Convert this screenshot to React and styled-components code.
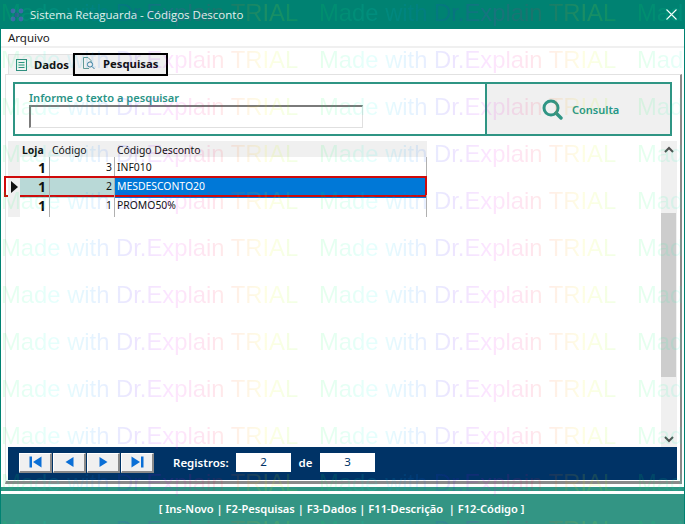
import React from "react";
import styled, { createGlobalStyle } from "styled-components";

const Global = createGlobalStyle`
  html, body { margin: 0; padding: 0; background: #fff; }
  * { box-sizing: border-box; }
`;

const Windowed = styled.div`
  position: relative;
  width: 685px;
  height: 524px;
  overflow: hidden;
  display: flex;
  flex-direction: column;
  background: #fff;
  border-left: 1px solid #008272;
  border-right: 1px solid #008272;
  font-family: "Noto Sans", sans-serif;
  color: #111;
`;

const TitleBar = styled.div`
  height: 29px;
  margin: 0 -1px;
  flex: none;
  background: #008272;
  display: flex;
  align-items: center;
  padding: 0 8px 0 9px;
  color: #e4f2ef;
`;
const TitleText = styled.span`
  margin-left: 5px;
  flex: 1;
  font-family: "Open Sans", sans-serif;
  font-size: 11.5px;
`;

const MenuBar = styled.div`
  height: 19px;
  flex: none;
  display: flex;
  align-items: center;
  padding-left: 7px;
  font-size: 11.5px;
  border-bottom: 2px solid #f0f0f0;
  color: #1a1a1a;
`;

const TabStrip = styled.div`
  height: 26px;
  flex: none;
  display: flex;
  align-items: flex-end;
  padding-left: 7px;
  position: relative;
  z-index: 1;
`;
const DataTab = styled.div`
  width: 65px;
  height: 20px;
  display: flex;
  align-items: center;
  gap: 7px;
  padding-left: 7px;
  background: #f3f3f3;
  border: 1px solid #e2e2e2;
  border-bottom: none;
  font-size: 11.3px;
  font-weight: 700;
`;
const SearchTab = styled.div`
  width: 95px;
  height: 23px;
  margin-bottom: -2px;
  display: flex;
  align-items: center;
  gap: 7px;
  padding: 0 0 3px 7px;
  background: #f0f0f0;
  border: 2px solid #000;
  font-size: 11.3px;
  font-weight: 700;
`;

const Page = styled.div`
  flex: none;
  height: 410px;
  margin-left: 4px;
  margin-right: 2px;
  border-top: 1px solid #e2e2e2;
  border-left: 1px solid #e2e2e2;
  border-right: 2px solid #8a8a8a;
  border-bottom: 3px solid #8a8a8a;
  display: flex;
  flex-direction: column;
  padding: 7px 2px 1px 2px;
`;

const SearchPanel = styled.div`
  height: 54px;
  flex: none;
  margin: 0 6px 0 5px;
  border: 2px solid #2f9584;
  display: flex;
`;
const SearchField = styled.div`
  width: 470px;
  padding: 7px 0 0 14px;
  display: flex;
  flex-direction: column;
`;
const FieldLabel = styled.label`
  font-size: 11.1px;
  font-weight: 600;
  line-height: 14px;
  color: #2a9486;
`;
const TextBox = styled.div`
  width: 334px;
  height: 23px;
  border: 1px solid #e0e0e0;
  border-top: 2px solid #7a7a7a;
  border-left: 2px solid #7a7a7a;
`;
const ConsultButton = styled.div`
  flex: 1;
  background: #f0f0f0;
  border-left: 2px solid #2f9584;
  display: flex;
  align-items: center;
  padding-left: 55px;
  gap: 9px;
  font-size: 11px;
  font-weight: 600;
  color: #23958a;
`;

const Results = styled.div`
  flex: 1;
  margin-top: 5px;
  display: flex;
  justify-content: space-between;
  align-items: stretch;
  padding-right: 1px;
`;
const Grid = styled.div`
  width: 419px;
  align-self: flex-start;
  font-size: 10.4px;
`;
const Columns = "12px 30px 65px 1fr";
const HeaderRow = styled.div`
  display: grid;
  grid-template-columns: ${Columns};
  height: 16px;
  background: #f0f0f0;
  align-items: center;
  padding-top: 2px;
`;
const HeadCell = styled.div`
  padding-left: 2px;
  font-weight: ${(p) => (p.$bold ? 700 : 400)};
  line-height: 14px;
`;
const DataRow = styled.div`
  display: grid;
  grid-template-columns: ${Columns};
  height: 19px;
  position: relative;
  ${(p) =>
    p.$selected &&
    `
    &::after {
      content: "";
      position: absolute;
      left: -4px;
      right: 0;
      top: 0;
      bottom: -2px;
      border: 2px solid #cf0a0a;
      pointer-events: none;
    }
  `}
`;
const Indicator = styled.div`
  background: #f0f0f0;
  display: flex;
  align-items: center;
  padding-left: 3px;
`;
const LojaCell = styled.div`
  font-size: 14px;
  font-weight: 700;
  text-align: right;
  padding-right: 3px;
  line-height: 22px;
  border-right: 1px solid #b0b0b0;
  background: ${(p) => (p.$selected ? "#b9d9d7" : "transparent")};
`;
const CodeCell = styled.div`
  text-align: right;
  padding-right: 2px;
  line-height: 21px;
  border-right: 1px solid #b0b0b0;
  background: ${(p) => (p.$selected ? "#b9d9d7" : "transparent")};
`;
const NameCell = styled.div`
  padding-left: 2px;
  line-height: 21px;
  border-right: 1px solid #b0b0b0;
  background: ${(p) => (p.$selected ? "#0078d7" : "transparent")};
  color: ${(p) => (p.$selected ? "#fff" : "#111")};
`;

const ScrollBar = styled.div`
  width: 16px;
  background: #f0f0f0;
  display: flex;
  flex-direction: column;
  align-items: center;
`;
const ScrollArrow = styled.div`
  height: 16px;
  display: flex;
  align-items: center;
  justify-content: center;
  flex: none;
`;
const ScrollThumb = styled.div`
  width: 15px;
  height: 164px;
  margin-top: 56px;
  background: #cdcdcd;
  align-self: flex-start;
`;
const ScrollGap = styled.div`
  flex: 1;
`;

const NavBar = styled.div`
  height: 33px;
  flex: none;
  background: #003366;
  margin-right: 1px;
  display: flex;
  align-items: center;
  padding: 0 0 2px 11px;
  color: #fff;
  font-size: 11.5px;
  font-weight: 600;
`;
const NavButtons = styled.div`
  display: flex;
  gap: 1px;
`;
const NavButton = styled.div`
  width: 33px;
  height: 20px;
  background: #f0f0f0;
  border-right: 2px solid #8a8a8a;
  border-bottom: 2px solid #8a8a8a;
  border-top: 1px solid #fff;
  border-left: 1px solid #fff;
  display: flex;
  align-items: center;
  justify-content: center;
`;
const RegLabel = styled.span`
  margin-left: 19px;
  width: 63px;
`;
const NumBox = styled.div`
  width: 55px;
  height: 19px;
  background: #fff;
  color: #003366;
  font-weight: 400;
  font-size: 11.5px;
  text-align: center;
  line-height: 17px;
`;
const DeLabel = styled.span`
  width: 29px;
  text-align: center;
`;

const BottomStripe = styled.div`
  height: 4px;
  flex: none;
  margin: 3px -1px 3px;
  background: #2f9584;
`;
const Footer = styled.div`
  flex: 1;
  margin: 0 -1px;
  background: #339584;
  color: #fff;
  font-size: 11.1px;
  font-weight: 600;
  display: flex;
  align-items: center;
  justify-content: center;
  white-space: pre;
  padding: 0 2px 2px 0;
`;

const Watermark = styled.div`
  position: absolute;
  left: 0;
  top: -1px;
  width: 685px;
  pointer-events: none;
  z-index: 5;
  display: flex;
  flex-direction: column;
`;
const WatermarkRow = styled.div`
  height: 47px;
  display: flex;
  flex: none;
`;
const WatermarkText = styled.span`
  flex: none;
  width: 297px;
  margin-right: 21px;
  font-family: "Liberation Sans", sans-serif;
  font-size: 23.8px;
  line-height: 28px;
  white-space: nowrap;
  color: transparent;
  background: linear-gradient(
    90deg,
    rgba(0, 255, 70, 0.1) 0%,
    rgba(0, 255, 230, 0.1) 18%,
    rgba(0, 130, 255, 0.1) 32%,
    rgba(70, 0, 255, 0.1) 45%,
    rgba(230, 0, 255, 0.1) 57%,
    rgba(255, 0, 70, 0.1) 72%,
    rgba(255, 130, 0, 0.1) 81%,
    rgba(240, 255, 0, 0.11) 90%,
    rgba(120, 255, 0, 0.1) 100%
  );
  -webkit-background-clip: text;
  background-clip: text;
`;

const First = () => (
  <svg width="13" height="12" viewBox="0 0 13 12">
    <rect x="0.5" y="0.5" width="2.5" height="11" fill="#0a6fd6" />
    <path d="M12.5 0.5 L4 6 L12.5 11.5 Z" fill="#0a6fd6" />
  </svg>
);
const Prev = () => (
  <svg width="9" height="12" viewBox="0 0 9 12">
    <path d="M8.5 1 L0.5 6 L8.5 11 Z" fill="#0a6fd6" />
  </svg>
);
const Next = () => (
  <svg width="9" height="12" viewBox="0 0 9 12">
    <path d="M0.5 1 L8.5 6 L0.5 11 Z" fill="#0a6fd6" />
  </svg>
);
const Last = () => (
  <svg width="13" height="12" viewBox="0 0 13 12">
    <path d="M0.5 0.5 L9 6 L0.5 11.5 Z" fill="#0a6fd6" />
    <rect x="10" y="0.5" width="2.5" height="11" fill="#0a6fd6" />
  </svg>
);
const ListIcon = () => (
  <svg width="11" height="12" viewBox="0 0 11 12" fill="none" stroke="#2f8f7f">
    <rect x="0.5" y="0.5" width="10" height="11" />
    <path d="M2.5 3.5 H8.5 M2.5 6 H8.5 M2.5 8.5 H8.5" />
  </svg>
);
const DocSearchIcon = () => (
  <svg width="14" height="14" viewBox="0 0 14 14" fill="none" stroke="#5f9a95">
    <path d="M7 12.5 H1.5 V1.5 H6 L9 4.5 V6" />
    <circle cx="8" cy="8.5" r="2.6" stroke="#3f7f9a" />
    <path d="M10 10.5 L12.5 13" stroke="#3f7f9a" />
  </svg>
);
const SearchIcon = () => (
  <svg width="21" height="21" viewBox="0 0 21 21" fill="none" stroke="#2f9584">
    <circle cx="9" cy="9" r="7" strokeWidth="3" />
    <path d="M14 14 L19 19" strokeWidth="3.4" strokeLinecap="round" />
  </svg>
);
const Close = () => (
  <svg width="11" height="11" viewBox="0 0 11 11" stroke="#fff" strokeWidth="1.1">
    <path d="M0.5 0.5 L10.5 10.5 M10.5 0.5 L0.5 10.5" />
  </svg>
);
const AppLogo = () => (
  <svg width="16" height="16" viewBox="0 0 16 16">
    <circle cx="8" cy="8" r="2.4" fill="#2d5f8f" />
    <circle cx="4" cy="4" r="2.4" fill="#3d6aa8" />
    <circle cx="12" cy="4" r="2.4" fill="#3d6aa8" />
    <circle cx="4" cy="12" r="2.4" fill="#3d6aa8" />
    <circle cx="12" cy="12" r="2.4" fill="#3d6aa8" />
  </svg>
);
const Chevron = ({ up }) => (
  <svg width="10" height="7" viewBox="0 0 10 7" fill="none" stroke="#505050" strokeWidth="2">
    <path d={up ? "M1 6 L5 2 L9 6" : "M1 1 L5 5 L9 1"} />
  </svg>
);
const RowMarker = () => (
  <svg width="7" height="12" viewBox="0 0 7 12">
    <path d="M0 0 L7 6 L0 12 Z" fill="#111" />
  </svg>
);

const rows = [
  { code: 3, name: "INF010" },
  { code: 2, name: "MESDESCONTO20", selected: true },
  { code: 1, name: "PROMO50%" },
];

export default function App() {
  return (
    <Windowed>
      <Global />
      <TitleBar>
        <AppLogo />
        <TitleText>Sistema Retaguarda - Códigos Desconto</TitleText>
        <Close />
      </TitleBar>
      <MenuBar>Arquivo</MenuBar>
      <TabStrip>
        <DataTab>
          <ListIcon />
          Dados
        </DataTab>
        <SearchTab>
          <DocSearchIcon />
          Pesquisas
        </SearchTab>
      </TabStrip>
      <Page>
        <SearchPanel>
          <SearchField>
            <FieldLabel>Informe o texto a pesquisar</FieldLabel>
            <TextBox />
          </SearchField>
          <ConsultButton>
            <SearchIcon />
            Consulta
          </ConsultButton>
        </SearchPanel>
        <Results>
          <Grid>
            <HeaderRow>
              <span />
              <HeadCell $bold>Loja</HeadCell>
              <HeadCell>Código</HeadCell>
              <HeadCell>Código Desconto</HeadCell>
            </HeaderRow>
            {rows.map((r) => (
              <DataRow key={r.code} $selected={r.selected}>
                <Indicator>{r.selected && <RowMarker />}</Indicator>
                <LojaCell $selected={r.selected}>1</LojaCell>
                <CodeCell $selected={r.selected}>{r.code}</CodeCell>
                <NameCell $selected={r.selected}>{r.name}</NameCell>
              </DataRow>
            ))}
          </Grid>
          <ScrollBar>
            <ScrollArrow>
              <Chevron up />
            </ScrollArrow>
            <ScrollThumb />
            <ScrollGap />
            <ScrollArrow>
              <Chevron />
            </ScrollArrow>
          </ScrollBar>
        </Results>
        <NavBar>
          <NavButtons>
            <NavButton><First /></NavButton>
            <NavButton><Prev /></NavButton>
            <NavButton><Next /></NavButton>
            <NavButton><Last /></NavButton>
          </NavButtons>
          <RegLabel>Registros:</RegLabel>
          <NumBox>2</NumBox>
          <DeLabel>de</DeLabel>
          <NumBox>3</NumBox>
        </NavBar>
      </Page>
      <BottomStripe />
      <Footer>[ Ins-Novo | F2-Pesquisas | F3-Dados | F11-Descrição  | F12-Código ]</Footer>
      <Watermark aria-hidden="true">
        {Array.from({ length: 12 }).map((_, i) => (
          <WatermarkRow key={i}>
            {[0, 1, 2].map((j) => (
              <WatermarkText key={j}>Made with Dr.Explain TRIAL</WatermarkText>
            ))}
          </WatermarkRow>
        ))}
      </Watermark>
    </Windowed>
  );
}
